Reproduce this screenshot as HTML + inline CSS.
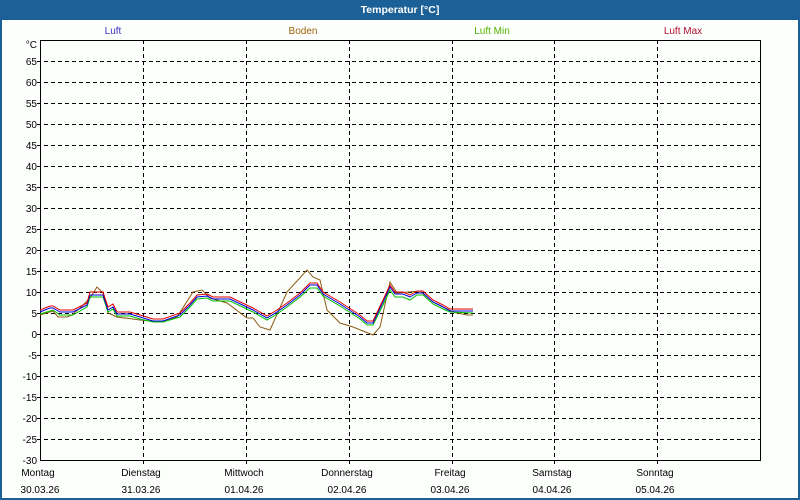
<!DOCTYPE html>
<html><head><meta charset="utf-8"><style>
html,body{margin:0;padding:0;background:#fff;}
svg{display:block;font-family:"Liberation Sans","DejaVu Sans",sans-serif;font-size:10px;}
</style></head><body>
<svg width="800" height="500" xmlns="http://www.w3.org/2000/svg">
<rect x="0" y="0" width="800" height="500" fill="#1b6096"/>
<rect x="2" y="20" width="796" height="478" fill="#fdfffd"/>
<text x="400" y="13" fill="#fff" font-weight="bold" text-anchor="middle" font-size="10.5">Temperatur [°C]</text>
<g text-anchor="middle" font-size="10">
<text x="113" y="34" fill="#4030c0">Luft</text>
<text x="303" y="34" fill="#a0600a">Boden</text>
<text x="492" y="34" fill="#50b000">Luft Min</text>
<text x="683" y="34" fill="#b01030">Luft Max</text>
</g>
<g stroke="#000" stroke-dasharray="4,3" stroke-width="1">
<path d="M143.5 40V464M246.5 40V464M349.5 40V464M452.5 40V464M554.5 40V464M657.5 40V464"/>
<path d="M37 61.5H760M37 82.5H760M37 103.5H760M37 124.5H760M37 145.5H760M37 166.5H760M37 187.5H760M37 208.5H760M37 229.5H760M37 250.5H760M37 271.5H760M37 292.5H760M37 313.5H760M37 334.5H760M37 355.5H760M37 376.5H760M37 397.5H760M37 418.5H760M37 439.5H760"/>
</g>
<rect x="40.5" y="40.5" width="720" height="420" fill="none" stroke="#000" stroke-width="1"/>
<g text-anchor="end" fill="#000" font-size="10">
<text x="37" y="48">°C</text>
<text x="37" y="65">65</text><text x="37" y="86">60</text><text x="37" y="107">55</text><text x="37" y="128">50</text>
<text x="37" y="149">45</text><text x="37" y="170">40</text><text x="37" y="191">35</text><text x="37" y="212">30</text>
<text x="37" y="233">25</text><text x="37" y="254">20</text><text x="37" y="275">15</text><text x="37" y="296">10</text>
<text x="37" y="317">5</text><text x="37" y="338">0</text><text x="37" y="359">-5</text><text x="37" y="380">-10</text>
<text x="37" y="401">-15</text><text x="37" y="422">-20</text><text x="37" y="443">-25</text><text x="37" y="464">-30</text>
</g>
<g text-anchor="middle" fill="#000" font-size="10">
<text x="38" y="476">Montag</text><text x="40" y="493">30.03.26</text>
<text x="141" y="476">Dienstag</text><text x="141" y="493">31.03.26</text>
<text x="244" y="476">Mittwoch</text><text x="244" y="493">01.04.26</text>
<text x="347" y="476">Donnerstag</text><text x="347" y="493">02.04.26</text>
<text x="450" y="476">Freitag</text><text x="450" y="493">03.04.26</text>
<text x="552" y="476">Samstag</text><text x="552" y="493">04.04.26</text>
<text x="655" y="476">Sonntag</text><text x="655" y="493">05.04.26</text>
</g>
<g fill="none" stroke-width="1">
<polyline stroke="#8a5a10" points="40,315 53,311 58,317 67,317 72,315 80,308 90,298 97,287 103,293 108,313 117,317 140,320 160,322 177,317 193,292 202,290 210,298 227,303 247,318 253,318 260,327 270,330 287,292 307,270 313,277 320,280 327,310 340,323 353,327 373,335 380,327 390,282 397,293 420,291 433,302 453,312 467,315 473,315"/>
<polyline stroke="#00c000" points="40,314 50,311 53,310 60,315 73,315 87,307 90,297 103,297 108,312 113,309 117,316 130,316 140,319 153,322 163,322 180,317 190,307 197,299 207,298 213,301 230,301 253,312 267,320 277,314 287,307 300,297 310,288 317,288 323,296 340,306 360,319 367,325 373,325 383,305 390,290 395,297 403,297 410,300 417,295 423,295 433,304 443,309 450,312 473,313"/>
<polyline stroke="#0000e0" points="40,312 50,308 53,308 60,312 73,312 87,305 90,295 103,295 108,310 113,307 117,314 130,314 140,317 153,321 163,321 180,315 190,305 197,297 207,296 213,299 230,299 253,310 267,318 277,312 287,305 300,295 310,285 317,285 323,294 340,304 360,317 367,323 373,323 383,302 390,287 395,294 403,294 410,297 417,293 423,293 433,302 443,307 450,311 473,311"/>
<polyline stroke="#e00000" points="40,310 50,306 53,306 60,310 73,310 87,303 90,292 103,292 108,307 113,304 117,312 130,312 140,315 153,319 163,319 180,313 190,303 197,295 207,294 213,297 230,297 253,308 267,316 277,310 287,303 300,293 310,283 317,283 323,292 340,302 360,315 367,321 373,321 383,300 390,285 395,292 403,292 410,295 417,291 423,291 433,300 443,305 450,309 473,309"/>
</g>
</svg>
</body></html>
